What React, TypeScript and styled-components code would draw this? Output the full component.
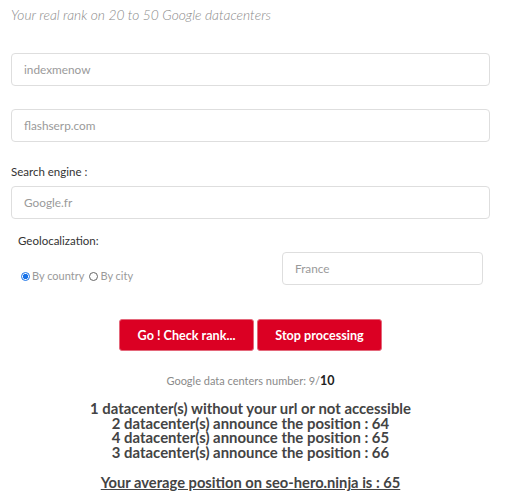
import React from "react";
import styled, { createGlobalStyle } from "styled-components";

const Global = createGlobalStyle`
  html, body { margin: 0; padding: 0; background: #fff; }
  body { font-family: "Lato", "Open Sans", sans-serif; }
`;

const Page = styled.div`
  padding: 5px 17px 20px 11px;
`;

const Title = styled.div`
  font-style: italic;
  font-weight: 300;
  font-size: 13.8px;
  line-height: 20px;
  color: #8a8a8a;
  margin-bottom: 28px;
`;

const Field = styled.div<{ $mt?: number; $w?: string }>`
  box-sizing: border-box;
  height: 33px;
  width: ${(p) => p.$w || "100%"};
  margin-top: ${(p) => p.$mt || 0}px;
  border: 1px solid #dedede;
  border-radius: 4px;
  padding: 0 12px;
  display: flex;
  align-items: center;
  font-size: 11.8px;
  color: #9a9a9a;
`;

const Label = styled.div<{ $mt: number; $pl?: number }>`
  margin-top: ${(p) => p.$mt}px;
  padding-left: ${(p) => p.$pl || 0}px;
  font-size: 11.5px;
  line-height: 18px;
  color: #333;
`;

const GeoRow = styled.div`
  display: flex;
  justify-content: space-between;
  align-items: flex-start;
  margin-top: 2px;
  padding: 0 7px 0 10px;
`;

const Radios = styled.div`
  display: flex;
  align-items: center;
  padding-top: 15px;
  line-height: 18px;
  font-size: 11px;
  color: #9a9a9a;
`;

const RadioItem = styled.label`
  display: flex;
  align-items: center;
  margin-right: 5px;
`;

const Dot = styled.span<{ $on?: boolean }>`
  box-sizing: border-box;
  width: 9px;
  height: 9px;
  border-radius: 50%;
  margin-right: 2px;
  border: ${(p) => (p.$on ? "1.5px solid #1a73e8" : "1px solid #666")};
  background: ${(p) => (p.$on ? "radial-gradient(circle, #1a73e8 0 2.6px, #fff 2.9px)" : "#fff")};
`;

const Buttons = styled.div`
  display: flex;
  justify-content: center;
  gap: 3px;
  margin-top: 34px;
`;

const Button = styled.button<{ $w: number }>`
  box-sizing: border-box;
  width: ${(p) => p.$w}px;
  height: 32px;
  border: 1px solid #e4677a;
  border-radius: 3px;
  background: #db0023;
  color: #fff;
  font-family: inherit;
  font-weight: 700;
  font-size: 12.6px;
  padding: 0;
`;

const Counter = styled.div`
  margin-top: 21px;
  text-align: center;
  font-size: 11px;
  line-height: 18px;
  color: #8a8a8a;
  b { color: #222; font-size: 12.5px; }
`;

const Results = styled.div`
  margin-top: 11px;
  text-align: center;
  font-weight: 700;
  font-size: 14.9px;
  line-height: 14.7px;
  color: #444;
`;

const Average = styled.div`
  margin-top: 13px;
  text-align: center;
  font-weight: 700;
  font-size: 14.7px;
  line-height: 18px;
  color: #444;
  text-decoration: underline;
`;

export default function App() {
  return (
    <>
      <Global />
      <Page>
        <Title>Your real rank on 20 to 50 Google datacenters</Title>
        <Field>indexmenow</Field>
        <Field $mt={23}>flashserp.com</Field>
        <Label $mt={21}>Search engine :</Label>
        <Field $mt={5}>Google.fr</Field>
        <Label $mt={13} $pl={7}>Geolocalization:</Label>
        <GeoRow>
          <Radios>
            <RadioItem><Dot $on />By country</RadioItem>
            <RadioItem><Dot />By city</RadioItem>
          </Radios>
          <Field $w="201px">France</Field>
        </GeoRow>
        <Buttons>
          <Button $w={135}>Go ! Check rank...</Button>
          <Button $w={125}>Stop processing</Button>
        </Buttons>
        <Counter>Google data centers number: 9/<b>10</b></Counter>
        <Results>
          <div>1 datacenter(s) without your url or not accessible</div>
          <div>2 datacenter(s) announce the position : 64</div>
          <div>4 datacenter(s) announce the position : 65</div>
          <div>3 datacenter(s) announce the position : 66</div>
        </Results>
        <Average>Your average position on seo-hero.ninja is : 65</Average>
      </Page>
    </>
  );
}
